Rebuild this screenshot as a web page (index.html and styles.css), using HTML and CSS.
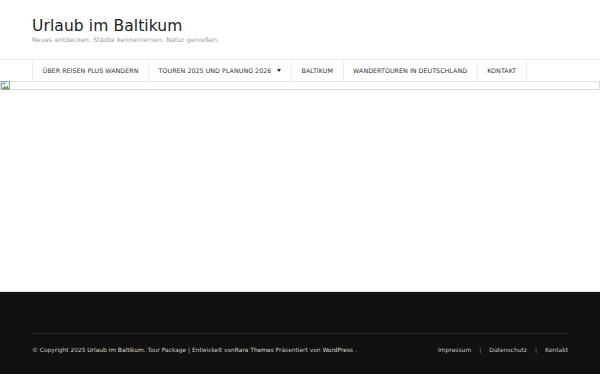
FILE: index.html
```html
<!DOCTYPE html>
<html lang="de">
<head>
    <meta charset="UTF-8">
    <meta name="viewport" content="width=device-width, initial-scale=1.0">
    <title>Urlaub im Baltikum</title>
    <link rel="stylesheet" href="styles.css">
</head>
<body>
    <!-- Header -->
    <header class="site-header">
        <div class="container branding">
            <p class="site-title">Urlaub im Baltikum</p>
            <p class="site-desc">Neues entdecken. Städte kennenlernen. Natur genießen.</p>
        </div>

        <nav class="main-nav">
            <ul class="container menu">
                <li><a href="#">Über Reisen plus Wandern</a></li>
                <li class="has-sub"><a href="#">Touren 2025 und Planung 2026</a><span class="caret"></span></li>
                <li><a href="#">Baltikum</a></li>
                <li><a href="#">Wandertouren in Deutschland</a></li>
                <li><a href="#">Kontakt</a></li>
            </ul>
        </nav>
    </header>

    <!-- Banner (image missing) -->
    <div class="banner">
        <svg class="broken" width="9" height="9" viewBox="0 0 9 9">
            <rect x="0.5" y="0.5" width="8" height="8" fill="#f4f4f4" stroke="#9aa7b5"/>
            <path d="M1 8 L3.5 5 L5 6.5 L6.5 4.5 L8 8 Z" fill="#5fa04e"/>
            <rect x="1.5" y="1.5" width="3" height="2" fill="#7fb2e6"/>
        </svg>
    </div>

    <main class="content"></main>

    <!-- Footer -->
    <footer class="site-footer">
        <div class="container footer-bottom">
            <p class="copyright">© Copyright 2025 <a href="#">Urlaub im Baltikum</a>. Tour Package | Entwickelt von<a href="#">Rara Themes</a> Präsentiert von <a href="#">WordPress</a> .</p>
            <ul class="footer-menu">
                <li><a href="#">Impressum</a></li>
                <li><a href="#">Datenschutz</a></li>
                <li><a href="#">Kontakt</a></li>
            </ul>
        </div>
    </footer>
</body>
</html>
```

FILE: styles.css
```css
* {
    margin: 0;
    padding: 0;
    box-sizing: border-box;
}

body {
    background: #fff;
    color: #333;
    font-family: 'DejaVu Sans', sans-serif;
}

a {
    color: inherit;
    text-decoration: none;
}

ul {
    list-style: none;
}

.container {
    width: 536px;
    margin: 0 auto;
}

/* Header */
.branding {
    padding: 17px 0 15px;
}

.site-title {
    font-size: 15.5px;
    line-height: 18px;
    color: #222;
    letter-spacing: 0.1px;
}

.site-desc {
    font-size: 6.3px;
    line-height: 9px;
    color: #999;
    letter-spacing: 0.15px;
}

.main-nav {
    border-top: 1px solid #eee;
    border-bottom: 1px solid #e3e3e3;
}

.menu {
    display: flex;
}

.menu li {
    display: flex;
    align-items: center;
    height: 21px;
    padding: 0 9.6px;
    border-right: 1px solid #eee;
    font-size: 6.3px;
    text-transform: uppercase;
    color: #333;
    letter-spacing: 0.05px;
}

.menu li:first-child {
    border-left: 1px solid #eee;
}

.caret {
    margin-left: 6px;
    border-left: 2.5px solid transparent;
    border-right: 2.5px solid transparent;
    border-top: 3px solid #333;
}

/* Banner */
.banner {
    height: 9px;
    border: 1px solid #ddd;
    border-top: none;
}

.broken {
    display: block;
    margin-top: -1px;
}

.content {
    height: 201px;
}

/* Footer */
.site-footer {
    background: #111;
    height: 83px;
    padding-top: 41px;
    border-top: 1px solid #ddd;
}

.footer-bottom {
    border-top: 1px solid #2a2a2a;
    display: flex;
    justify-content: space-between;
    align-items: center;
    padding-top: 12px;
}

.copyright {
    font-size: 5.9px;
    color: #c4c4c4;
}

.copyright a {
    color: #ddd6c6;
}

.footer-menu {
    display: flex;
    align-items: center;
    font-size: 6px;
    color: #c4c4c4;
}

.footer-menu li + li::before {
    content: "|";
    margin: 0 8px;
    color: #888;
}
```
